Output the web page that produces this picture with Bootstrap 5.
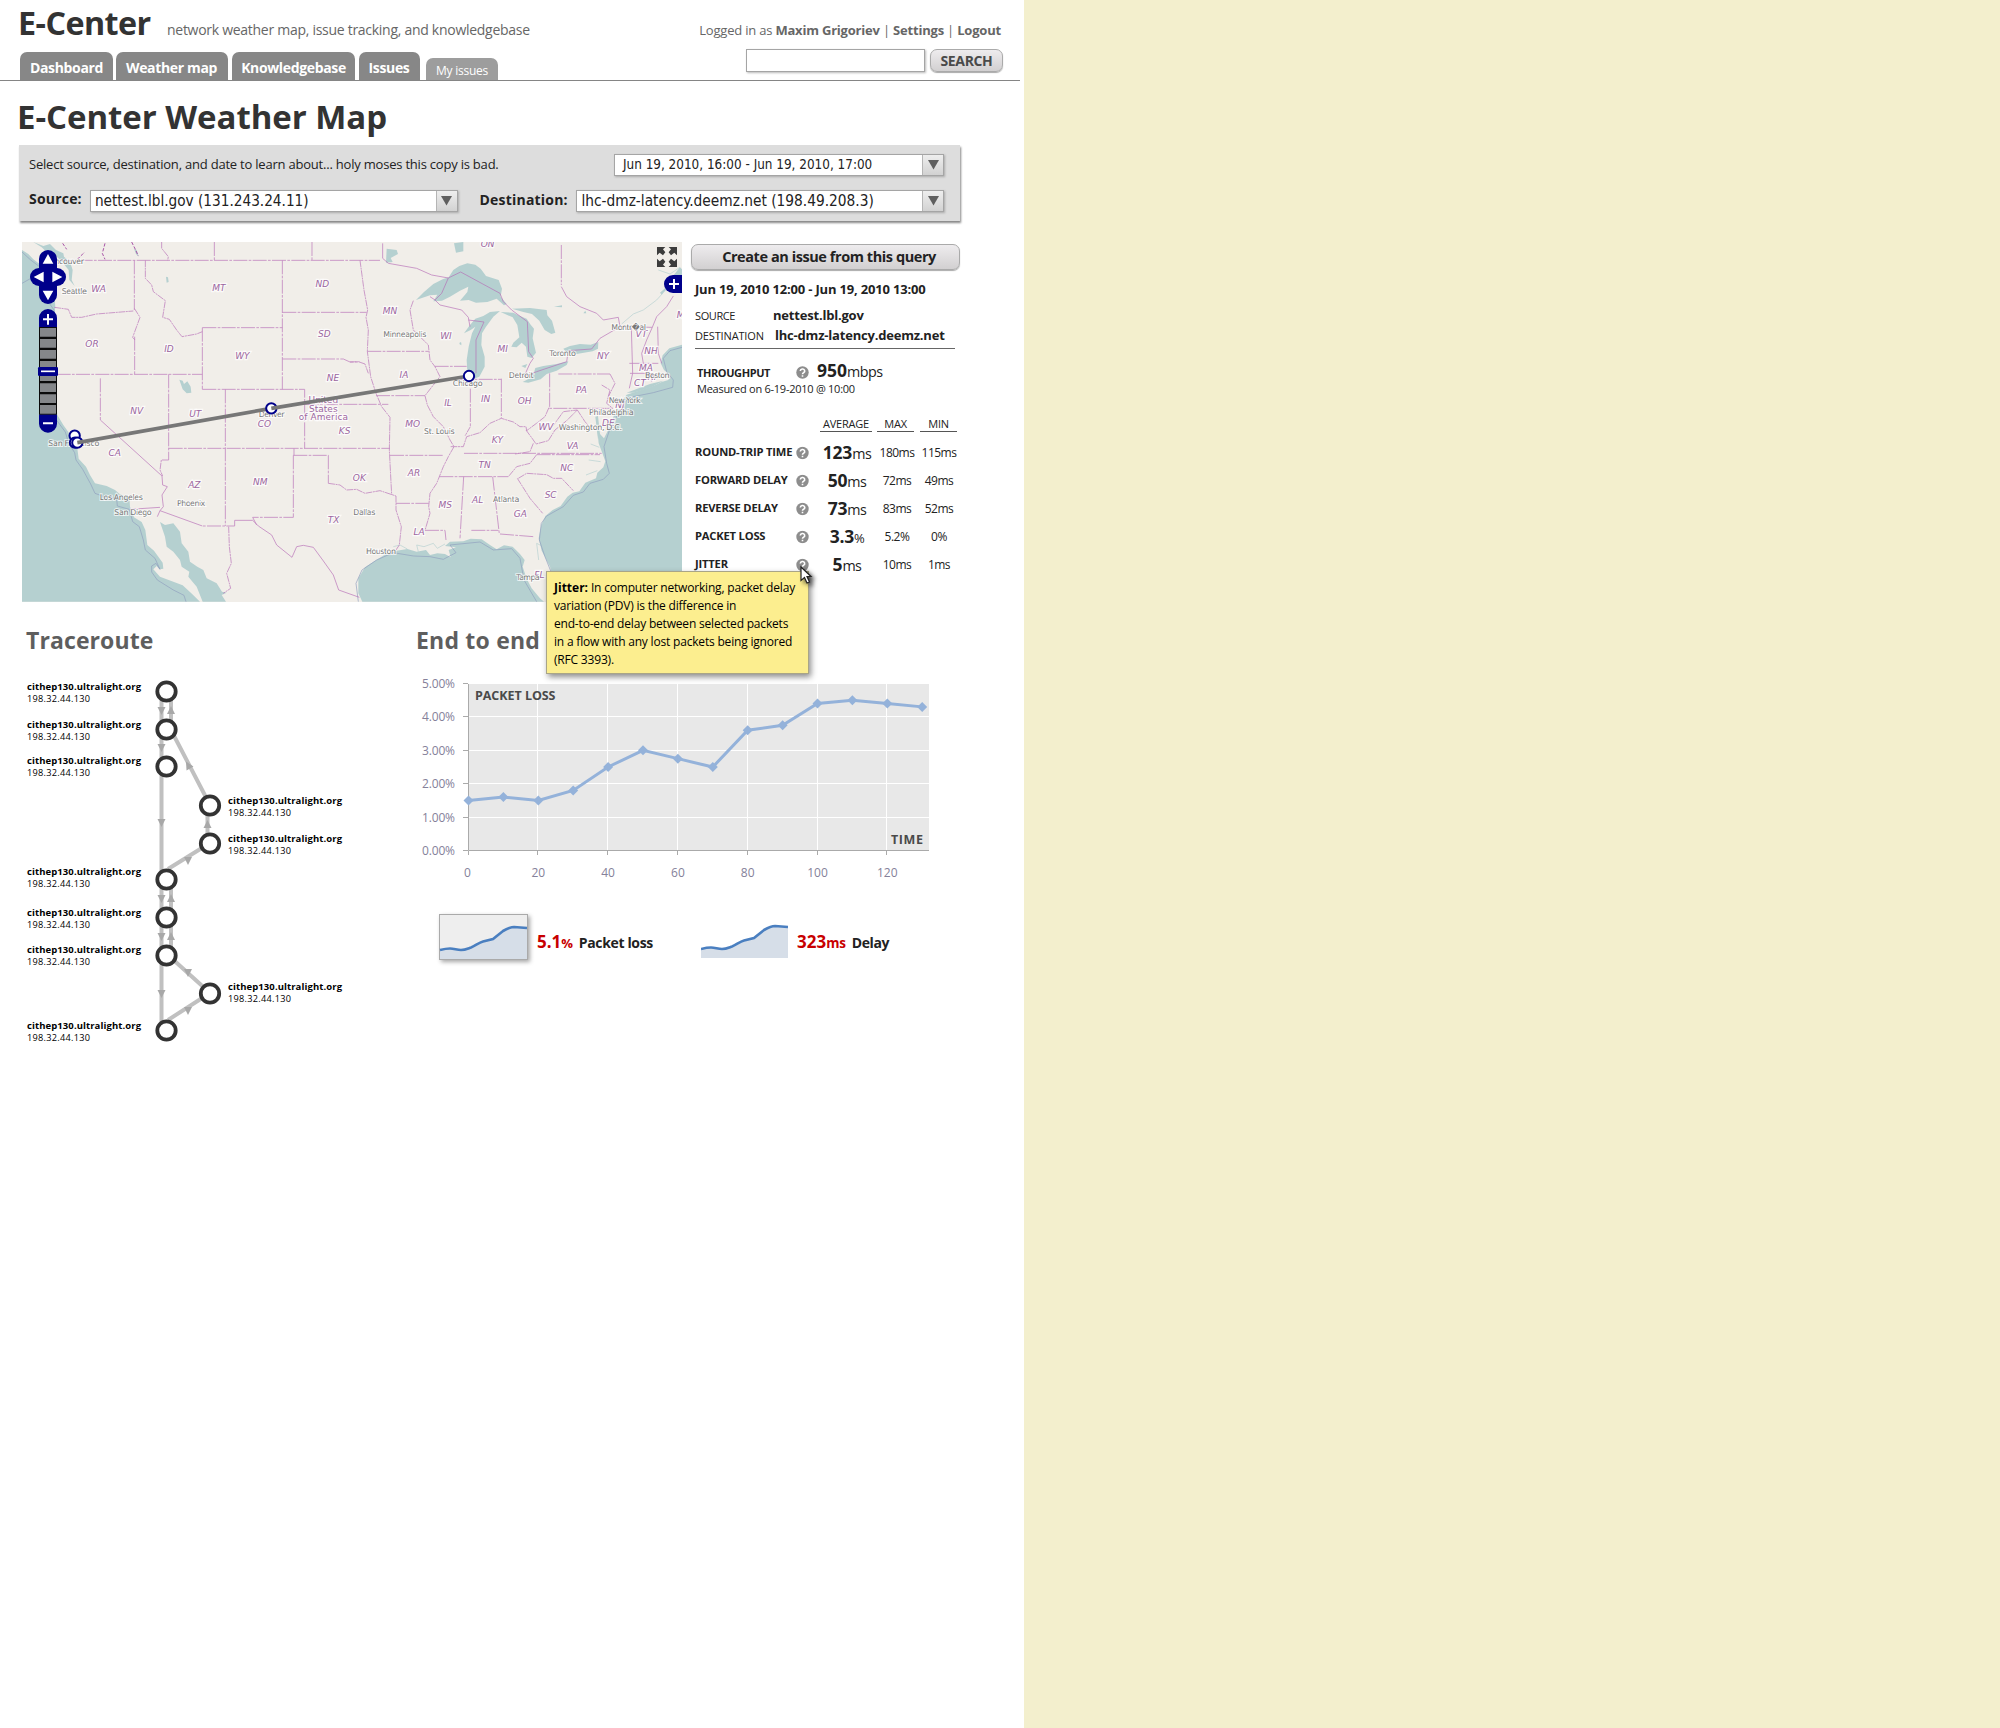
<!DOCTYPE html>
<html lang="en">
<head>
<meta charset="utf-8">
<meta name="viewport" content="width=device-width, initial-scale=1">
<title>E-Center Weather Map</title>
<link href="https://cdn.jsdelivr.net/npm/bootstrap@5.3.0/dist/css/bootstrap.min.css" rel="stylesheet">
<style>
body{background:#f3efcd;font-family:"Open Sans","Noto Sans",sans-serif;letter-spacing:-.02em;color:#222;font-size:13px;line-height:20px}
.sheet{width:1024px;height:1728px;position:relative}
.masthead{width:1020px;height:81px;border-bottom:1px solid #858585}
.brandrow{height:44px;padding:2px 19px 0 18px}
.brand{font-size:32.3px;line-height:40px;font-weight:700;color:#333;width:149px;letter-spacing:-.55px}
.tagline{font-size:14px;color:#666;letter-spacing:-.28px}
.account{color:#666;font-size:13px;letter-spacing:-.2px}
.tabs{gap:3.5px;padding-left:20px;height:36px}
.tab{background:#878787;color:#fff;border-radius:7px 7px 0 0;height:28px;line-height:31px;font-size:14px;font-weight:700;text-align:center;text-decoration:none;letter-spacing:-.35px}
.subtab{background:#9d9d9d;height:22px;font-size:12px;line-height:26px;font-weight:400;width:72px;margin-left:3px;letter-spacing:-.25px}
.finder{padding:0 17px 8px 0;gap:5px}
.finder input{width:179px;height:23px;border:1px solid #a5a5a5;box-shadow:1px 1px 2px #bbb;padding:0 4px;outline:0}
.graybtn{border:1px solid #aaa;border-radius:7px;background:linear-gradient(#eeecee,#d2d0d1);font-weight:700;padding:0;color:#222;box-shadow:0 1px 1px #aaa}
.searchbtn{width:73px;height:23px;font-size:14px;line-height:22px;color:#4a4a4a;letter-spacing:-.35px}
h1.pagetitle{font-size:33px;line-height:40px;font-weight:700;color:#333;margin:16px 0 8px 17px;letter-spacing:-.05px}
.querybox{width:941px;height:76px;margin-left:19px;padding:8px 16px 0 10px;background:#ddd;box-shadow:1px 2px 2px 0 #888}
.querybox .qrow{height:22px}
.querybox label{font-weight:700;font-size:14px;letter-spacing:.2px}
.combo{height:22px;margin-top:.5px;background:#fff;border:1px solid #a5a5a5;box-shadow:1px 1px 2px #aaa;font-family:"DejaVu Sans Condensed","DejaVu Sans",sans-serif;letter-spacing:0;line-height:20px;font-size:15px;padding-left:4px}
.combo .drop{width:21px;height:20px;border-left:1px solid #b5b5b5;background:linear-gradient(#eee,#d2d2d2);display:flex;align-items:center;justify-content:center}
.mapbox{width:660px;height:360px;margin-left:22px}
.facts{width:269px;margin-left:9px;padding-top:2px}
.createbtn{width:269px;height:26px;font-size:14.5px;line-height:24px;padding-left:7px;letter-spacing:-.43px}
.facts .line{padding-left:4px;height:20px}
.lab{font-size:11px;letter-spacing:-.4px}
.big{font-size:17.5px;font-weight:700;letter-spacing:-.2px}
.unit{font-size:14.3px;letter-spacing:-.5px}
.metrics{display:grid;grid-template-columns:101px 14px 67px 40px 44px;padding-left:4px;text-align:center;font-size:12px;letter-spacing:-.5px}
.metrics>*{height:28px;line-height:28px;white-space:nowrap}
.metrics .mhead{height:15px;line-height:14px;font-size:11px;border-bottom:1px solid #555;letter-spacing:-.22px}
.metrics .mname{text-align:left;font-weight:700;font-size:11.2px;letter-spacing:-.2px}
.metrics .avg{padding-left:7px}
.metrics .val{padding-top:1px}
h2.sect{font-size:23px;line-height:30px;font-weight:700;color:#5e5e5e;margin:0;letter-spacing:0}
.tip{position:absolute;left:546px;top:571px;width:263px;height:103px;background:#fcee8f;border:1px solid #a9a587;box-shadow:2px 3px 6px rgba(0,0,0,.45);padding:7px 7px;font-size:12px;line-height:18px;color:#000;white-space:nowrap;letter-spacing:-.19px}
.pointer{position:absolute;left:799px;top:565px}
svg{display:block;letter-spacing:0}
.red{color:#c80000;font-weight:700;font-size:17px;letter-spacing:0}
.state{font:italic 27px "DejaVu Sans",sans-serif;fill:#9c66a0;text-anchor:middle;paint-order:stroke;stroke:#fff;stroke-width:7px;stroke-opacity:.75}
.city{font:24px "DejaVu Sans",sans-serif;fill:#777;paint-order:stroke;stroke:#fff;stroke-width:6px;stroke-opacity:.7}
</style>
</head>
<body>
<div class="sheet bg-white">
<header class="masthead">
 <div class="brandrow d-flex align-items-baseline">
  <div class="brand">E-Center</div>
  <div class="tagline">network weather map, issue tracking, and knowledgebase</div>
  <div class="account ms-auto">Logged in as <b>Maxim Grigoriev</b> | <b>Settings</b> | <b>Logout</b></div>
 </div>
 <div class="d-flex">
  <nav class="tabs d-flex align-items-end">
   <a class="tab" style="width:93px">Dashboard</a><a class="tab" style="width:112px;margin-right:1px;margin-left:-1px">Weather map</a><a class="tab" style="width:123px">Knowledgebase</a><a class="tab" style="width:61px">Issues</a><a class="tab subtab">My issues</a>
  </nav>
  <form class="finder d-flex align-items-end ms-auto"><input type="text" aria-label="Search"><button type="button" class="graybtn searchbtn">SEARCH</button></form>
 </div>
</header>
<h1 class="pagetitle">E-Center Weather Map</h1>
<section class="querybox">
 <div class="qrow d-flex justify-content-between">
  <span style="line-height:22px;font-size:13px;letter-spacing:-.21px">Select source, destination, and date to learn about... holy moses this copy is bad.</span>
  <div class="combo d-flex justify-content-between" style="width:330px;font-size:13.4px;padding-left:8px">Jun 19, 2010, 16:00 - Jun 19, 2010, 17:00<span class="drop"><svg width="11" height="10"><path d="M0 0H11L5.5 9.5Z" fill="#5f5f5f"/></svg></span></div>
 </div>
 <div class="qrow d-flex" style="margin-top:14px">
  <label style="width:61px;line-height:20px">Source:</label>
  <div class="combo d-flex justify-content-between" style="width:368px;font-size:15.200px">nettest.lbl.gov (131.243.24.11)<span class="drop"><svg width="11" height="10"><path d="M0 0H11L5.5 9.5Z" fill="#5f5f5f"/></svg></span></div>
  <label style="width:97px;margin-left:22px;line-height:21px">Destination:</label>
  <div class="combo d-flex justify-content-between" style="width:368px;font-size:15.3px">lhc-dmz-latency.deemz.net (198.49.208.3)<span class="drop"><svg width="11" height="10"><path d="M0 0H11L5.5 9.5Z" fill="#5f5f5f"/></svg></span></div>
 </div>
</section>
<div class="d-flex" style="margin-top:21px">
<div class="mapbox">
<svg width="660" height="360" viewBox="22 242 660 360">
<rect x="22" y="242" width="660" height="360" fill="#f1eee9"/>
<g transform="translate(0,230) scale(.33333)">
 <g fill="#b5d0d0">
  <path d="M66 60L85 72 100 88 122 104 150 120 166 160 163 190 166 232 162 260 168 300 169 400 167 500 172 555 190 585 205 606 212 632 232 655 236 686 258 710 270 735 285 760 320 768 345 780 360 793 388 802 390 830 402 862 425 876 436 900 442 945 462 962 488 998 490 1016 478 1018 470 1008 460 1018 480 1040 520 1055 548 1066 574 1090 600 1115H66Z"/>
  <path d="M100 36L130 48 150 42 168 60 190 70 192 80 210 95 218 120 215 150 224 168 208 150 206 120 186 95 165 75 140 66 125 52Z"/>
  <path d="M480 876L495 885 520 880 540 905 545 940 565 965 570 995 592 1010 610 1020 620 1045 650 1060 666 1085 680 1088 665 1095 678 1115H608L590 1070 565 1040 568 1025 545 1010 540 990 520 965 500 950 495 920Z"/>
  <path d="M538 449L548 452 552 462 562 454 572 470 574 488 560 490 548 478Z"/>
  <path d="M498 140L504 142 506 156 500 158ZM402 56L410 60 416 80 408 72Z"/>
 </g>
 <g transform="translate(1050,0)">
  <g fill="#b5d0d0">
   <path d="M37 1115L25 1090 25 1045 45 1012 75 992 108 972 140 962 172 957 200 965 228 960 240 975 262 970 285 972 302 982 296 960 318 952 285 948 300 935 340 934 362 926 395 928 420 945 440 958 462 946 488 950 510 972 524 990 518 1010 530 1046 545 1075 570 1105 582 1115H700L605 1030 600 1010 575 962 566 925 574 885 586 858 608 840 632 828 652 800 668 788 688 784 706 758 738 745 742 728 760 712 766 694 758 672 746 640 742 600 752 614 762 625 785 580 790 560 803 545 818 510 830 494 880 478 905 470 935 456 955 450 960 436 942 420 932 400 938 376 958 355 996 344V1115Z"/>
   <path d="M198 210L222 186 250 162 278 148 296 142 310 120 328 108 352 100 376 104 392 116 408 138 446 150 456 176 452 200 470 222 462 226 440 206 412 216 378 218 356 210 330 212 352 186 355 170 330 182 300 200 276 212 250 214 262 194 240 196Z"/>
   <path d="M342 310L360 285 376 266 400 258 420 246 450 243 430 260 408 290 396 310 394 345 404 380 404 410 388 440 372 446 352 425 350 390 356 350 366 310 376 290 362 300Z"/>
   <path d="M452 246L490 248 510 258 530 266 542 284 552 296 548 325 558 368 545 384 532 380 528 350 515 338 500 352 484 350 490 338 508 322 502 285 488 262Z"/>
   <path d="M486 236L540 234 590 240 592 256 606 272 616 308 604 312 584 300 568 272 546 252 520 246Z"/>
   <path d="M518 456L548 440 556 414 580 408 620 402 655 394 650 405 620 422 590 432 572 448 535 458ZM640 356L660 348 690 342 722 344 745 336 744 356 728 364 680 372 652 370ZM514 408L532 402 526 414Z"/>
   <path d="M312 40L340 36 340 64 318 68ZM110 56L140 60 144 72 122 84 128 96 108 98ZM930 188L945 175 955 155 990 112 996 118 996 140 968 160 950 178 935 194ZM700 250l6 -8 3 8zM612 230l24 -4v6zM736 560l8 -2 6 55 -6 14ZM330 336l4 2v8l-6 -4z"/>
   <path d="M830 488L900 462 940 452 905 472 850 488Z"/>
  </g>
  <g fill="none" stroke="#b5d0d0" stroke-width="2"><path d="M815 282L850 252 880 240 920 210 938 190M925 120L960 132 990 112M722 642L748 652M716 690L752 695M708 735L742 722M600 960L560 940 566 990M172 957L150 945 130 950M205 965L200 945 222 950 250 940 262 955 285 942"/></g>
 </g>
 <!-- maritime limits -->
 <g fill="none" stroke="#8f9fbe" stroke-width="2.5" opacity=".8">
  <path d="M66 66L92 90 116 108M66 160L116 132M148 220L162 240 158 500 162 560 196 606 206 640 224 668 228 690 248 718 272 762 285 790 312 800 350 806 352 828 388 838 398 875 418 890 430 930 436 960 465 985 480 1018 468 1000 455 1008 455 1026 472 1050 520 1080 552 1096 558 1115"/>
  <path d="M1075 1115L1068 1060 1086 1020 1130 990 1180 968 1240 978 1290 980 1330 988 1368 968 1350 945 1440 936 1480 960 1535 956 1560 985 1572 1050 1610 1115"/>
  <path d="M1655 1030L1635 980 1618 930 1624 880 1640 858 1690 830 1720 796 1750 786 1770 760 1810 748 1828 730 1820 700 1812 650 1832 590 1850 560 1872 520 1890 502 1960 488 2018 472 2020 450 2000 425 1990 385 2010 362 2046 352"/>
 </g>
 <!-- state and national boundaries -->
 <g fill="none" stroke="#b56ab5" stroke-width="2.4" opacity=".8" stroke-linejoin="round">
  <path stroke-dasharray="42 4 8 4" d="M178 91H1140M403 91V240M847 91V478M847 247H1100M607 293H847M607 293V478M607 478H914V655M847 387H1030L1050 396 1080 396M170 433H607M506 433V690M301 445V570M506 655H1170M676 478V888M404 320V433M914 523H1165M882 655V676M880 676V862H758M985 676V760M880 676H985M704 871V888H607M1128 497H1275M1102 364H1286M1304 409H1400M1170 676H1330M1188 820H1286M1318 740H1525M1378 448H1504M1504 446V565M1411 476V590M1649 430V535H1790M1675 432H1830M1392 670H1805M1610 674H1800M1391 740L1380 925M1478 740L1498 912M1414 901H1495M1500 912L1600 920M1275 901H1335L1338 930M643 36V91M936 36V91M1684 45V165"/>
  <path d="M301 570L486 738 488 765 502 770 486 795 490 830 480 842 607 888M390 838L480 832M704 871H758L775 888 815 915 830 945 876 982 890 950 910 946 940 952 968 990 1000 1035 1016 1080 1078 1102M758 862L770 885"/>
  <path stroke-dasharray="20 2 6 2" d="M436 91V145L455 165 460 185 496 212 488 262 508 268 530 300 546 320 590 312 607 305M403 235L420 262 398 322 405 330M163 232L205 238 215 262 245 262 290 252 400 243M485 36V55L505 80 503 91M480 842L472 860M506 690H484L480 720 488 738M686 890L688 950 694 1000 680 1030 692 1075 670 1090"/>
  <path stroke-dasharray="20 2 6 2" d="M985 760L1020 765 1040 780 1070 778 1095 790 1140 782 1188 798M1080 91L1092 180 1103 240 1098 262 1105 300 1102 364 1112 440 1128 490 1145 530 1170 562 1168 660 1175 795M1050 396L1075 395 1095 402 1105 430M1188 798V840L1204 890 1198 945 1188 960M1240 212L1230 240 1240 300 1285 345 1290 390 1305 410 1320 440 1300 465 1275 497 1282 525 1300 560 1330 590 1350 630 1362 650 1345 680 1330 710 1310 760 1290 790 1286 830 1290 850 1275 901M1402 440V470M1411 590L1395 618M1352 650L1390 650 1400 620 1440 608 1470 580 1504 565 1540 576 1560 590 1578 590 1580 602 1612 578 1635 560 1648 530M1578 600L1600 630 1608 642 1645 632 1665 600 1700 572 1732 540 1690 545 1650 600M1732 540L1755 575 1770 592M1805 465L1830 480 1820 520 1838 535 1790 535M1830 432L1845 460 1825 500M1610 674L1590 700 1550 710 1525 740M1600 640L1590 665 1545 672M1555 745L1580 730 1640 734 1660 745 1685 745 1720 782M1552 745L1590 805 1628 850"/>
  <path d="M1148 40V85L1165 100 1250 115 1295 135 1345 144 1382 126 1500 190 1510 215 1535 240 1582 275 1586 365 1600 385 1590 400 1572 440 1610 425 1700 395 1705 362 1775 357 1800 325 1860 290 1957 292 1970 260 2000 230 2020 198M1345 144L1325 190 1305 210 1290 200M1305 210L1320 225 1385 240 1405 262 1410 290M1684 170L1700 200 1740 230 1790 250 1810 270 1855 262 1860 290M1894 292L1898 430 1888 475M1957 292L1940 330 1925 370 1930 400M1973 290L1975 370 1985 400M1888 400H1975M1890 430H1955V455M1405 270L1452 276 1428 330 1428 430"/>
 </g>
 <path d="M188 40l12 18M232 88l18 -18 4 -4M315 40l-8 30 8 18M395 36l12 24 8 18" fill="none" stroke="#a854a8" stroke-width="3" stroke-dasharray="10 5"/>
 <g class="state">
  <text x="296" y="187">WA</text><text x="276" y="352">OR</text><text x="507" y="365">ID</text><text x="657" y="183">MT</text><text x="967" y="170">ND</text><text x="973" y="320">SD</text><text x="727" y="387">WY</text><text x="999" y="453">NE</text><text x="410" y="553">NV</text><text x="586" y="561">UT</text><text x="793" y="591">CO</text><text x="1034" y="611">KS</text><text x="344" y="678">CA</text><text x="583" y="773">AZ</text><text x="781" y="765">NM</text><text x="1078" y="752">OK</text><text x="1001" y="878">TX</text>
  <text x="1170" y="252">MN</text><text x="1338" y="328">WI</text><text x="1508" y="366">MI</text><text x="1212" y="445">IA</text><text x="1344" y="528">IL</text><text x="1457" y="517">IN</text><text x="1574" y="521">OH</text><text x="1744" y="488">PA</text><text x="1809" y="388">NY</text><text x="1238" y="590">MO</text><text x="1492" y="638">KY</text><text x="1638" y="600">WV</text><text x="1718" y="658">VA</text><text x="1454" y="715">TN</text><text x="1700" y="722">NC</text><text x="1242" y="738">AR</text><text x="1336" y="834">MS</text><text x="1433" y="819">AL</text><text x="1561" y="860">GA</text><text x="1652" y="804">SC</text><text x="1257" y="915">LA</text><text x="1618" y="1045">FL</text><text x="1463" y="50">ON</text><text x="1924" y="320">VT</text><text x="1953" y="372">NH</text><text x="1938" y="423">MA</text><text x="1920" y="467">CT</text><text x="1956" y="450">RI</text><text x="1860" y="534">NJ</text><text x="1825" y="588">DE</text><text x="2042" y="265">M</text>
  <g style="font-style:normal"><text x="970" y="518">United</text><text x="970" y="545">States</text><text x="970" y="571" textLength="148">of America</text></g>
 </g>
 <g class="city">
  <text x="150" y="102" textLength="102">ancouver</text><text x="185" y="192" textLength="76">Seattle</text><text x="145" y="649" textLength="153">San Francisco</text><text x="299" y="809" textLength="130">Los Angeles</text><text x="343" y="856" textLength="112">San Diego</text><text x="531" y="827" textLength="85">Phoenix</text><text x="776" y="560" textLength="78">Denver</text>
  <text x="1150" y="321" textLength="129">Minneapolis</text><text x="1648" y="379" textLength="80">Toronto</text><text x="1526" y="445" textLength="75">Detroit</text><text x="1358" y="469" textLength="90">Chicago</text><text x="1272" y="612" textLength="92">St. Louis</text><text x="1060" y="856" textLength="66">Dallas</text><text x="1098" y="973" textLength="90">Houston</text><text x="1479" y="815" textLength="79">Atlanta</text><text x="1549" y="1050" textLength="70">Tampa</text><text x="1834" y="300" textLength="104">Montr�al</text><text x="1935" y="444" textLength="74">Boston</text><text x="1826" y="518" textLength="96">New York</text><text x="1767" y="555" textLength="134">Philadelphia</text><text x="1676" y="600" textLength="190">Washington, D.C.</text>
 </g>
 <!-- measured path -->
 <g fill="#fff" stroke="#00008b" stroke-width="6">
  <circle cx="224" cy="617" r="15.500"/><circle cx="225" cy="638" r="15.500"/><circle cx="232" cy="638" r="15.500"/>
  <path d="M232 638L814 535" stroke="#777" stroke-width="11"/>
  <circle cx="814" cy="535" r="15.500"/>
  <path d="M814 535L1407 438" stroke="#777" stroke-width="11"/>
  <circle cx="1407" cy="438" r="15.500"/>
 </g>
 <!-- pan and zoom controls -->
 <g fill="#00008b">
  <rect x="117" y="60" width="54" height="162" rx="27"/><rect x="90" y="114" width="108" height="54" rx="27"/>
  <path d="M117 292V264a27 27 0 0 1 54 0V292ZM117 553V581a27 27 0 0 0 54 0V553Z"/>
  <path d="M144 72L160 101H128ZM144 211L160 182H128ZM101 141L131 125V157ZM187 141L157 125V157Z" fill="#fff"/>
  <path d="M144 252V284M129 268H159M129 580H159" stroke="#fff" stroke-width="6"/>
  <rect x="117" y="291" width="54" height="263" fill="#0b0b0b"/>
  <path fill="#85878a" d="M120 294h48v26h-48zM120 327h48v26h-48zM120 360h48v26h-48zM120 393h48v26h-48zM120 427h48v26h-48zM120 460h48v26h-48zM120 493h48v26h-48zM120 525h48v26h-48z"/>
  <rect x="114" y="411" width="60" height="27" rx="4"/><path d="M123 424H165" stroke="#fff" stroke-width="5"/>
  <path d="M2046 135H2019a27 27 0 0 0 0 54H2046Z"/><path d="M2022 147V177M2007 162H2037" stroke="#fff" stroke-width="6"/>
 </g>
 <g fill="#3c3c3c"><path id="arw" d="M1971 51H1996L1989 58 1996 67 1989 76 1979 68 1971 76Z"/><use href="#arw" transform="translate(4002,0) scale(-1,1)"/><use href="#arw" transform="translate(0,162) scale(1,-1)"/><use href="#arw" transform="translate(4002,162) scale(-1,-1)"/></g>
</g>
</svg>
</div>
<aside class="facts">
 <button type="button" class="graybtn createbtn d-block">Create an issue from this query</button>
 <div class="line fw-bold" style="margin-top:9px;letter-spacing:-.18px">Jun 19, 2010 12:00 - Jun 19, 2010 13:00</div>
 <div class="line d-flex align-items-baseline" style="margin-top:6px"><span class="lab" style="width:78px">SOURCE</span><b style="letter-spacing:-.2px">nettest.lbl.gov</b></div>
 <div class="line d-flex align-items-baseline"><span class="lab" style="width:80px;letter-spacing:-.15px">DESTINATION</span><b style="letter-spacing:-.2px">lhc-dmz-latency.deemz.net</b></div>
 <div style="margin:3px 5px 11px 4px;border-top:1px solid #666"></div>
 <div class="line d-flex align-items-baseline" style="padding-left:6px"><b class="lab" style="width:99px">THROUGHPUT</b><svg class="align-self-center" style="margin-right:8px;margin-top:4px" width="13" height="13"><use href="#qm"/></svg><span class="big" style="letter-spacing:0">950</span><span class="unit">mbps</span></div>
 <div style="margin:2px 0 21px 6px;font-size:11px;line-height:14px">Measured on 6-19-2010 @ 10:00</div>
 <div class="metrics">
  <span class="mhead border-0"></span><span class="mhead border-0"></span><span class="mhead" style="margin:0 5px 0 10px">AVERAGE</span><span class="mhead" style="margin:0 3px 0 0">MAX</span><span class="mhead" style="margin:0 4px 0 3px">MIN</span>
 </div>
 <div class="metrics" id="rows" style="margin-top:5.500px"></div>
</aside>
</div>
<div class="d-flex" style="margin-top:23px">
<section style="width:400px">
 <h2 class="sect" style="padding-left:26px;letter-spacing:.1px">Traceroute</h2>
 <svg id="trace" width="400" height="400" viewBox="0 655 400 400" font-family="Open Sans, Noto Sans, sans-serif">
  <g stroke="#c0c0c0" stroke-width="4" fill="none"><path d="M161.500 691V1030M171 691V730M171 730L210 805M207.500 805V843M210 843L168 869M171 879V956M168 955L210 993M210 993L168 1020"/></g>
 </svg>
</section>
<section style="width:560px">
 <h2 class="sect" style="padding-left:16px;letter-spacing:.2px">End to end</h2>
 <svg id="chart" width="560" height="256" viewBox="400 655 560 256" font-family="Open Sans, Noto Sans, sans-serif"></svg>
 <div class="d-flex align-items-start" style="padding-left:39px;margin-top:3px">
  <svg style="overflow:visible;filter:drop-shadow(2px 2px 2px rgba(0,0,0,.35))" width="89" height="47" viewBox="0 0 89 47"><rect x=".5" y=".5" width="88" height="45" fill="#eee" stroke="#aaa"/><g id="spark"><path d="M1 36L11 34.500 22 36 32 33.500 44 27.500 54 25 64 17 75 13 88 14V45H1Z" fill="#d6dee8"/><path d="M1 36C5 35 8 34.500 11 34.500 15 34.500 18 36 22 36 26 36 29 34.500 32 33.500 36 32 40 28.500 44 27.500L54 25 64 17Q71 13 75 13L88 14" fill="none" stroke="#4a7fc0" stroke-width="2.600"/></g></svg>
  <div style="margin:18px 0 0 9px;font-size:14px;width:164px"><span class="red">5.1</span><b style="color:#c80000;font-size:13px">%</b><b style="margin-left:6px;letter-spacing:-.35px">Packet loss</b></div>
  <svg width="87" height="47" viewBox="1 1 87 47"><use href="#spark"/></svg>
  <div style="margin:18px 0 0 9px;font-size:14px"><span class="red">323</span><b style="color:#c80000;font-size:13.5px">ms</b><b style="margin-left:6px;letter-spacing:-.35px">Delay</b></div>
 </div>
</section>
</div>
<div class="tip"><b style="letter-spacing:0">Jitter:</b> In computer networking, packet delay<br>variation (PDV) is the difference in<br>end-to-end delay between selected packets<br>in a flow with any lost packets being ignored<br>(RFC 3393).</div>
<svg class="pointer" width="20" height="24" style="filter:drop-shadow(3px 3px 2px rgba(0,0,0,.6))"><path d="M2 2V15.500L5.500 12.500 8 18 10.500 17 8 11.500H12Z" fill="#fff" stroke="#222" stroke-width="1.200"/></svg>
<svg width="0" height="0"><symbol id="qm" viewBox="0 0 13 13"><circle cx="6.500" cy="6.500" r="6.200" fill="#8d8d8d"/><path d="M4.300 5a2.200 2 0 1 1 3.300 1.700Q6.500 7.200 6.500 8.200M6.500 9.200V10.800" fill="none" stroke="#fff" stroke-width="1.600"/></symbol></svg>
</div>
<script src="https://cdn.jsdelivr.net/npm/bootstrap@5.3.0/dist/js/bootstrap.bundle.min.js"></script>
<script>
// Latency and loss metrics
document.getElementById('rows').innerHTML=[['ROUND-TRIP TIME','123','ms','180ms','115ms'],['FORWARD DELAY','50','ms','72ms','49ms'],['REVERSE DELAY','73','ms','83ms','52ms'],['PACKET LOSS','3.3','%','5.2%','0%'],['JITTER','5','ms','10ms','1ms']].map(r=>
 `<span class="mname">${r[0]}</span><svg width="13" height="28" viewBox="0 -8.5 13 28"><use href="#qm" width="13" height="13"/></svg><span class="avg"><span class="big">${r[1]}</span><span class="unit"${r[2]=='%'?' style="font-size:13px"':''}>${r[2]}</span></span><span class="val">${r[3]}</span><span class="val">${r[4]}</span>`).join('');
// Traceroute hops: node centre and label baseline
const L=166.5,R=210;
let t='';
for(const [x,y,a] of [[161.5,711,180],[171,710,0],[161.5,748,180],[188,765,-30],[161.5,823,180],[207.5,824,0],[188,861,180],[161.5,899,180],[171,898,0],[161.5,937,180],[171,936,0],[188,973,180],[161.5,994,180],[188,1011,180]])
 t+=`<path d="M-4 4h8l-4 -8z" transform="translate(${x},${y}) rotate(${a})" fill="#a8a8a8"/>`;
for(const [x,y,b] of [[L,691.5,690],[L,729.5,728],[L,766.5,764],[R,805.5,804],[R,843.5,842],[L,879.5,875],[L,917.5,916],[L,955.5,953],[R,993.5,990],[L,1030.5,1029]]){
 const tx=x==L?27:228;
 t+=`<circle cx="${x}" cy="${y}" r="9.200" fill="#fff" stroke="#333" stroke-width="3.800"/><text x="${tx}" y="${b}" font-size="9.500" font-weight="700" textLength="114" fill="#000">cithep130.ultralight.org</text><text x="${tx}" y="${b+12}" font-size="9.200" textLength="63" fill="#000">198.32.44.130</text>`;
}
document.getElementById('trace').innerHTML+=t;
// Packet loss over time
const X=v=>468.5+v*3.49,Y=v=>850.5-v*33.4;
let c='<rect x="468" y="684" width="461" height="167" fill="#e8e8e8"/>';
for(let v=20;v<=120;v+=20)c+=`<path d="M${Math.round(X(v))-.5} 684V850" stroke="#fff"/>`;
for(let v=0;v<=5;v++){const y=Math.floor(Y(v))+.5;if(v&&v<5)c+=`<path d="M469 ${y}H929" stroke="#fff"/>`;
 c+=`<path d="M463 ${y}H468" stroke="#aaa"/><text x="455" y="${y+4.5}" font-size="12" text-anchor="end" textLength="33" fill="#85819a">${v}.00%</text>`;}
c+='<path d="M468.500 684V850.500H929" fill="none" stroke="#aaa"/>';
for(let v=0;v<=120;v+=20)c+=`<path d="M${Math.round(X(v))-.5} 851V855" stroke="#aaa"/><text x="${X(v)-(v?0:1)}" y="876.500" font-size="12" text-anchor="middle" fill="#85819a">${v}</text>`;
const D=[1.5,1.6,1.5,1.8,2.5,3,2.75,2.5,3.6,3.75,4.4,4.5,4.4,4.3];
c+=`<polyline points="${D.map((v,i)=>X(i*10)+','+Y(v))}" fill="none" stroke="#94b2da" stroke-width="3"/>`;
D.forEach((v,i)=>c+=`<path d="M${X(i*10)} ${Y(v)-5}l5 5 -5 5 -5 -5z" fill="#94b2da"/>`);
c+='<text x="475" y="700" font-size="12.500" font-weight="700" fill="#4a4a4a" textLength="80.500">PACKET LOSS</text><text x="891" y="844" font-size="12.500" font-weight="700" fill="#4a4a4a" textLength="32">TIME</text>';
document.getElementById('chart').innerHTML=c;
</script>
</body>
</html>
